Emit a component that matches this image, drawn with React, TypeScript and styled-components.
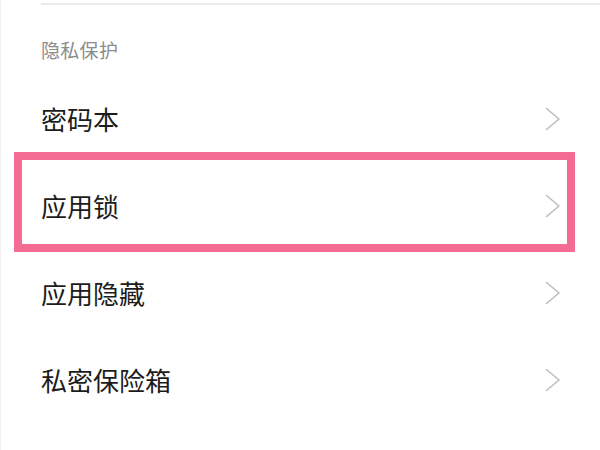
import React from 'react';
import styled, { createGlobalStyle } from 'styled-components';

const GlobalStyle = createGlobalStyle`
  html, body {
    margin: 0;
    padding: 0;
    background: #ffffff;
  }
  body {
    font-family: "Noto Sans CJK SC", "Noto Sans", sans-serif;
  }
`;

const items = [
  { key: 'notes', label: '密码本' },
  { key: 'lock', label: '应用锁', highlighted: true },
  { key: 'hide', label: '应用隐藏' },
  { key: 'safe', label: '私密保险箱' },
];

function Chevron() {
  return (
    <ChevronIcon width="16" height="24" viewBox="0 0 16 24" fill="none">
      <polyline
        points="1.5,1.5 14,12 1.5,22.5"
        stroke="#bdbdbd"
        strokeWidth="1.6"
        strokeLinecap="round"
        strokeLinejoin="round"
      />
    </ChevronIcon>
  );
}

function App() {
  return (
    <>
      <GlobalStyle />
      <Page>
        <Divider />
        <SectionTitle>隐私保护</SectionTitle>
        <List>
          {items.map((item) => (
            <Row key={item.key}>
              <Label>{item.label}</Label>
              <Chevron />
              {item.highlighted && <Highlight />}
            </Row>
          ))}
        </List>
      </Page>
    </>
  );
}

export default App;

const Page = styled.div`
  width: 600px;
  height: 450px;
  overflow: hidden;
  background: #ffffff;
  border-left: 1px solid #f1f1f1;
  box-sizing: border-box;
  display: flex;
  flex-direction: column;
`;

const Divider = styled.div`
  height: 2px;
  margin: 3px 0 0 40px;
  background: #ebebeb;
  flex-shrink: 0;
`;

const SectionTitle = styled.div`
  padding: 31px 0 11px 40px;
  font-size: 19px;
  line-height: 28px;
  color: #8c8c8c;
  letter-spacing: 0.3px;
  flex-shrink: 0;
`;

const List = styled.div`
  display: flex;
  flex-direction: column;
`;

const Row = styled.div`
  position: relative;
  height: 87px;
  padding: 0 39px 0 40px;
  display: flex;
  align-items: center;
  justify-content: space-between;
  flex-shrink: 0;
`;

const Label = styled.span`
  font-size: 26px;
  line-height: 36px;
  color: #1c1c1c;
`;

const ChevronIcon = styled.svg`
  display: block;
  flex-shrink: 0;
`;

const Highlight = styled.div`
  position: absolute;
  top: -10px;
  bottom: -3px;
  left: 13px;
  right: 25px;
  border: 8px solid #f46b94;
  pointer-events: none;
`;
